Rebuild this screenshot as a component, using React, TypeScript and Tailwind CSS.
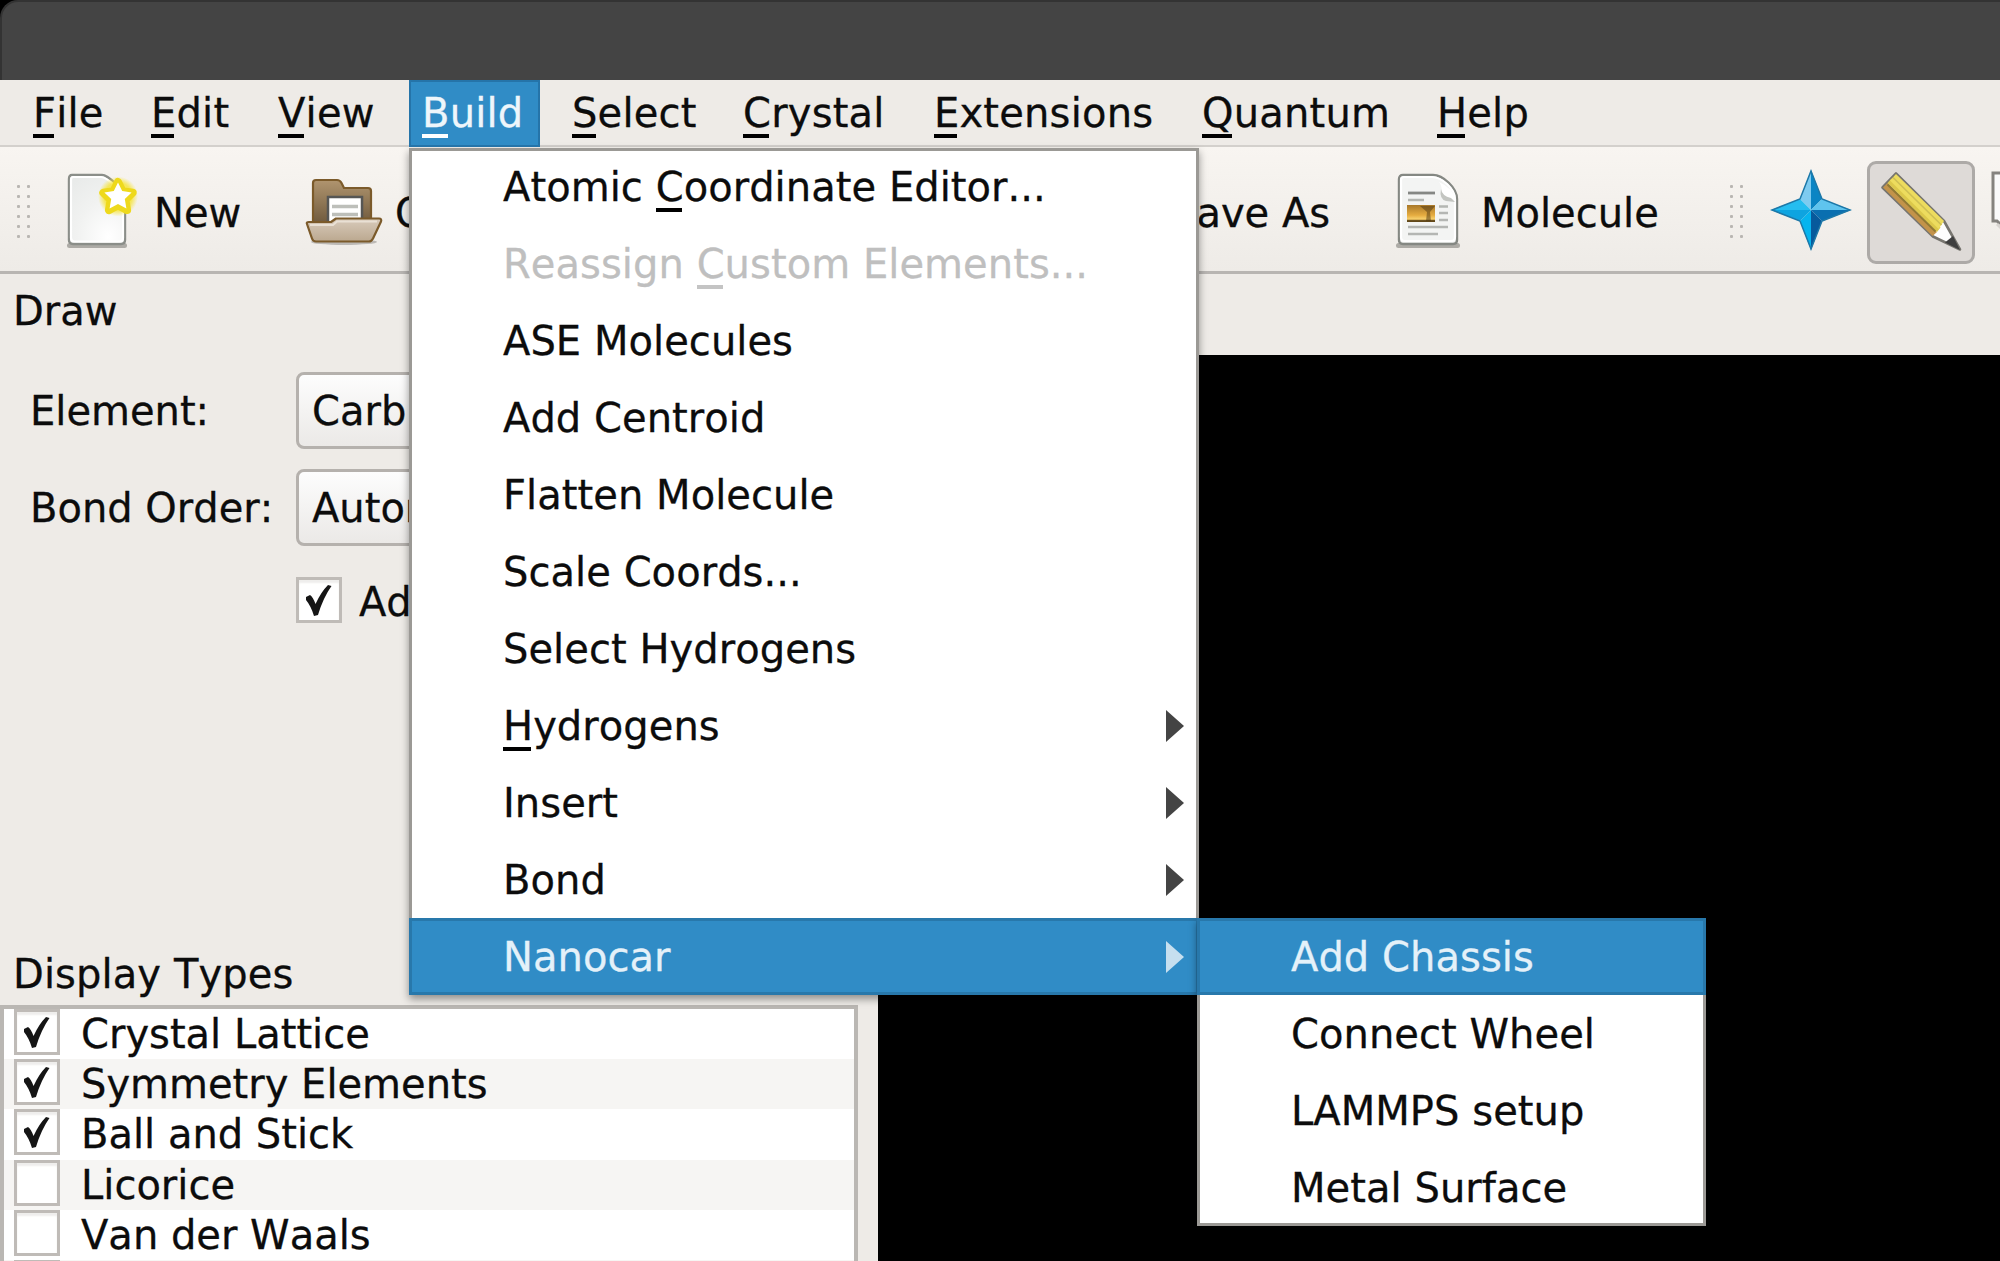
import type { ReactNode } from 'react';

function Mnemonic({ text, at, color = 'bg-black' }: { text: string; at: number; color?: string }) {
  return (
    <>
      {text.slice(0, at)}
      <span className="relative inline-block">
        {text[at]}
        <span className={`absolute left-0 right-[2px] bottom-0 h-[4px] ${color}`} />
      </span>
      {text.slice(at + 1)}
    </>
  );
}

const menus = [
  { label: 'File', box: 'w-[118px]' },
  { label: 'Edit', box: 'w-[127px]' },
  { label: 'View', box: 'w-[129px]' },
  { label: 'Build', box: 'w-[131px] mr-[34px]', active: true },
  { label: 'Select', box: 'w-[171px]' },
  { label: 'Crystal', box: 'w-[191px]' },
  { label: 'Extensions', box: 'w-[268px]' },
  { label: 'Quantum', box: 'w-[235px]' },
  { label: 'Help', box: 'w-[120px]' },
];

function MenuBar() {
  return (
    <div className="flex h-[67px] shrink-0 border-b-2 border-[#d3d0cc] bg-[#eeebe7] pl-[35px]">
      {menus.map((m) => (
        <div
          key={m.label}
          className={`flex h-[67px] shrink-0 items-start tracking-[0.2px] ${m.box} ${m.active ? 'z-10 border-2 border-[#2574a9] bg-[#308cc6] pl-[13px] pt-[6px] text-[#eef6fb]' : 'pt-[8px]'}`}
        >
          <span className="-ml-[2px]">
            <Mnemonic text={m.label} at={0} color={m.active ? 'bg-white' : 'bg-black'} />
          </span>
        </div>
      ))}
    </div>
  );
}

function Grip() {
  return (
    <div className="grid shrink-0 grid-cols-2 gap-[7px]">
      {Array.from({ length: 12 }, (_, i) => (
        <span key={i} className="size-[3px] rounded-[1px] bg-[#b9b6b2]" />
      ))}
    </div>
  );
}

function NewIcon() {
  return (
    <svg width="76" height="80" viewBox="0 0 76 80" className="shrink-0">
      <defs>
        <radialGradient id="paper" cx="0.7" cy="0.9" r="1">
          <stop offset="0" stopColor="#ffffff" />
          <stop offset="0.55" stopColor="#f1f2f1" />
          <stop offset="1" stopColor="#e9ebea" />
        </radialGradient>
        <radialGradient id="glow">
          <stop offset="0.7" stopColor="#f6e436" stopOpacity="0.8" />
          <stop offset="1" stopColor="#f6e436" stopOpacity="0" />
        </radialGradient>
      </defs>
      <rect x="4" y="71" width="60" height="5" rx="2.5" fill="#5c5a55" opacity="0.45" />
      <path d="M9 3h30c6 0 23 16 23 23v42q0 4-4 4H10q-4 0-4-4V7q0-4 3-4z" fill="url(#paper)" stroke="#8b8e89" strokeWidth="2.4" />
      <path d="M10 5h28c6 0 22 15 22 21v40q0 3.500-3.500 3.500H11.500Q8 69.500 8 66V8q0-3 2-3z" fill="none" stroke="#fff" strokeWidth="2.200" />
      <circle cx="55" cy="24.500" r="20" fill="url(#glow)" />
      <path
        d="M55 10l4.600 9.200 10.100 1.500-7.300 7.200 1.700 10.200-9.100-4.800-9.100 4.800 1.700-10.200-7.300-7.200 10.100-1.500z"
        fill="#fff"
        stroke="#eed91c"
        strokeWidth="8"
        strokeLinejoin="round"
      />
      <path d="M55 10.500l4.200 8.500 9.400 1.400-6.800 6.600 1.600 9.400-8.400-4.400-8.400 4.400 1.600-9.400-6.800-6.600 9.400-1.400z" fill="#fff" />
    </svg>
  );
}

function FolderIcon() {
  return (
    <svg width="80" height="72" viewBox="0 0 80 72" className="shrink-0">
      <defs>
        <linearGradient id="back" x1="0" y1="0" x2="0" y2="1">
          <stop offset="0" stopColor="#b0956f" />
          <stop offset="1" stopColor="#6b563a" />
        </linearGradient>
        <linearGradient id="front" x1="0" y1="0" x2="0" y2="1">
          <stop offset="0" stopColor="#d8cbbb" />
          <stop offset="1" stopColor="#bba88f" />
        </linearGradient>
      </defs>
      <ellipse cx="40" cy="66" rx="33" ry="3" fill="#5c5a55" opacity="0.35" />
      <path d="M9 50V7q0-3 3-3h21q3 0 4.500 3l2.500 5h24q3 0 3 3v35z" fill="url(#back)" stroke="#7b5a2a" strokeWidth="2.200" />
      <path d="M24 21h34v30H24z" fill="#fff" stroke="#565654" strokeWidth="2.500" />
      <path d="M28 30.500h26M28 38.500h26" stroke="#bdbfba" strokeWidth="3.600" />
      <path d="M3 48q-1-2 2-2h22l5-3.500h43q3 0 2 3l-8 17q-1.500 3-4 3H12q-3 0-4-3z" fill="url(#front)" stroke="#7b5a2a" strokeWidth="2.200" strokeLinejoin="round" />
      <path d="M6 49h23l4-3.500h40" fill="none" stroke="#e9e0d4" strokeWidth="2" />
    </svg>
  );
}

function MoleculeIcon() {
  return (
    <svg width="66" height="78" viewBox="0 0 66 78" className="shrink-0">
      <defs>
        <linearGradient id="sunset" x1="0" y1="0" x2="0" y2="1">
          <stop offset="0" stopColor="#a8782a" />
          <stop offset="0.6" stopColor="#e6ac40" />
          <stop offset="0.8" stopColor="#f5cc68" />
          <stop offset="1" stopColor="#8a6422" />
        </linearGradient>
      </defs>
      <rect x="1" y="70" width="64" height="5" rx="2.500" fill="#5c5a55" opacity="0.45" />
      <path d="M8 2h30c10 0 24 13 24 24v41q0 4-4 4H8q-4 0-4-4V6q0-4 4-4z" fill="#f3f4f3" stroke="#858883" strokeWidth="2.400" />
      <path d="M9 4h28c10 0 23 12 23 22v38q0 4-4 4H9.500Q6 68 6 64V7q0-3 3-3z" fill="none" stroke="#fff" strokeWidth="2.200" />
      <path d="M44 9q4 4 2 14l14 4Q58 15 44 9z" fill="#fff" />
      <path d="M46 16q1 7 10 9l4 4-9-1q-7-2-5-12z" fill="#c3c5c1" />
      <path d="M13 20h27" stroke="#858784" strokeWidth="2.800" />
      <path d="M13 27h16M44 33.500h9M44 40h9M44 47h9M13 54h40M13 61h30" stroke="#b4b6b3" strokeWidth="2.500" />
      <rect x="12" y="32" width="28" height="17" fill="url(#sunset)" />
      <path d="M12 48h28" stroke="#4b3612" strokeWidth="2" opacity="0.7" />
      <path d="M31 48l1-9-7-6h15l-5 6 1 9z" fill="#4b3612" opacity="0.5" />
    </svg>
  );
}

function CompassStar() {
  return (
    <svg width="82" height="82" viewBox="0 0 82 82" className="shrink-0">
      <path d="M41 1L30 30 41 41z" fill="#7ecbf0" />
      <path d="M41 1l11 29-11 11z" fill="#0b85c4" />
      <path d="M81 41L52 30 41 41z" fill="#5fc4ee" />
      <path d="M81 41L52 52 41 41z" fill="#0a6fb0" />
      <path d="M41 81l11-29-11-11z" fill="#075a9c" />
      <path d="M41 81L30 52l11-11z" fill="#06b4ee" />
      <path d="M1 41l29 11 11-11z" fill="#0ea4e0" />
      <path d="M1 41l29-11 11 11z" fill="#25bdf0" />
      <path d="M41 2l11 28 28 11-28 11-11 28-11-28L2 41l28-11z" fill="none" stroke="#1d78a8" strokeWidth="1.500" />
    </svg>
  );
}

function PencilIcon() {
  return (
    <svg width="84" height="84" viewBox="0 0 84 84">
      <path d="M3.500 17.500L17 3.500 65 51l16 28.500L54 66.500z" fill="#fdfdfd" stroke="#77756f" strokeWidth="2.600" strokeLinejoin="round" />
      <path d="M4 17.500l4.500-4.500L58 62l-4.500 4z" fill="#c3934a" />
      <path d="M8.500 13l4-4.500L61.500 57.500 58 62z" fill="#dcc84a" />
      <path d="M11 10.500L17 4l48 47-5.500 8z" fill="#eddc5e" />
      <path d="M8.500 14.500l48 47" stroke="#917a33" strokeWidth="2" />
      <path d="M14 7.500L62.500 55" stroke="#cfc054" strokeWidth="1.600" />
      <path d="M81 80l-7-14-8 6.500z" fill="#3f3f3f" />
    </svg>
  );
}

function ToolBar() {
  return (
    <div className="flex h-[127px] shrink-0 items-center overflow-hidden whitespace-nowrap border-b-[3px] border-[#b8b5b2] bg-linear-to-b from-[#f8f5f1] to-[#eeebe7] pl-[17px] pt-[5px]">
      <Grip />
      <div className="ml-[33px] flex w-[241px] shrink-0 items-center"><NewIcon /><span className="ml-[15px] pt-[3px]">New</span></div>
      <div className="flex w-[800px] shrink-0 items-center"><FolderIcon /><span className="ml-[11px] pt-[3px]">O</span></div>
      <div className="-ml-[35px] w-[326px] shrink-0 pl-[102px] pt-[3px]">Save As</div>
      <div className="flex w-[335px] shrink-0 items-center"><MoleculeIcon /><span className="ml-[20px] pt-[3px]">Molecule</span></div>
      <Grip />
      <div className="ml-[27px] shrink-0 pb-[3px]"><CompassStar /></div>
      <div className="ml-[15px] mt-px flex h-[103px] w-[108px] shrink-0 items-center justify-center rounded-[9px] border-[3px] border-[#adaaa7] bg-[#dedad7]"><PencilIcon /></div>
      <svg width="30" height="82" viewBox="0 0 30 82" className="ml-[16px] shrink-0">
        <path d="M2 2h32v50H8l-2-2H2z" fill="#fafafa" stroke="#85837f" strokeWidth="3" />
        <path d="M6 53l12 12" stroke="#d8d5d1" strokeWidth="3" />
      </svg>
    </div>
  );
}

function Check({ on }: { on: boolean }) {
  return (
    <span className="flex size-[46px] shrink-0 items-center justify-center border-[3px] border-[#bfbbb7] bg-white shadow-[inset_0_3px_2px_#efeeec]">
      {on && (
        <svg width="30" height="34" viewBox="0 0 30 34">
          <path d="M2 14l4-2q3 2 5.500 9Q17 9 24 2l3.500 1Q19 15 14 32l-4 1Q7 23 2 17z" fill="#151515" />
        </svg>
      )}
    </span>
  );
}

function Combo({ children }: { children: ReactNode }) {
  return (
    <div className="flex h-[77px] w-[300px] items-center rounded-[8px] border-[3px] border-[#b5b1ad] bg-linear-to-b from-[#fdfdfd] to-[#ebe9e7] pl-[13px]">
      {children}
    </div>
  );
}

const displayTypes = [
  { label: 'Crystal Lattice', on: true },
  { label: 'Symmetry Elements', on: true },
  { label: 'Ball and Stick', on: true },
  { label: 'Licorice', on: false },
  { label: 'Van der Waals', on: false },
  { label: '', on: false },
];

function SidePanel() {
  return (
    <div className="flex w-[878px] shrink-0 flex-col">
      <div className="pl-[13px] pt-[12px]">Draw</div>
      <div className="-ml-px grid grid-cols-[266px_300px] items-center gap-y-[20px] pl-[31px] pt-[36px]">
        <span>Element:</span>
        <Combo>Carb</Combo>
        <span>Bond Order:</span>
        <Combo>Autom</Combo>
      </div>
      <div className="ml-[296px] mt-[31px] flex h-[46px] items-center gap-[17px]">
        <Check on />
        <span className="pt-[3px]">Ad</span>
      </div>
      <div className="mt-[326px] h-[62px] pl-[13px] tracking-[0.1px]">Display Types</div>
      <div className="h-[256px] w-[858px] shrink-0 border-x-4 border-t-4 border-[#bab7b3] bg-white">
        {displayTypes.map((d) => (
          <div key={d.label} className="flex h-[50.200px] items-start gap-[21px] pl-[10px] even:bg-[#f6f5f3]">
            <Check on={d.on} />
            <span>{d.label}</span>
          </div>
        ))}
      </div>
    </div>
  );
}

type Item = { label: string; at?: number; disabled?: boolean; arrow?: boolean; active?: boolean };

const buildItems: Item[] = [
  { label: 'Atomic Coordinate Editor...', at: 7 },
  { label: 'Reassign Custom Elements...', at: 9, disabled: true },
  { label: 'ASE Molecules' },
  { label: 'Add Centroid' },
  { label: 'Flatten Molecule' },
  { label: 'Scale Coords...' },
  { label: 'Select Hydrogens' },
  { label: 'Hydrogens', at: 0, arrow: true },
  { label: 'Insert', arrow: true },
  { label: 'Bond', arrow: true },
  { label: 'Nanocar', arrow: true, active: true },
];

const nanocarItems: Item[] = [
  { label: 'Add Chassis', active: true },
  { label: 'Connect Wheel' },
  { label: 'LAMMPS setup' },
  { label: 'Metal Surface' },
];

function MenuItem({ item }: { item: Item }) {
  const tone = item.active
    ? 'border-y-[3px] border-[#2574a9] bg-[#308cc6] text-[#e4f1f9]'
    : item.disabled
      ? 'text-[#bfbfbf]'
      : '';
  return (
    <div className={`flex h-[77px] items-center justify-between pl-[94px] pr-[15px] ${tone}`}>
      <span className="tracking-[0.05px]">
        {item.at === undefined ? item.label : <Mnemonic text={item.label} at={item.at} color={item.disabled ? 'bg-[#c4c4c4]' : 'bg-black'} />}
      </span>
      {item.arrow && (
        <svg width="18" height="32" viewBox="0 0 18 32">
          <path d="M0 0l18 16L0 32z" fill={item.active ? '#c6dfef' : '#444'} />
        </svg>
      )}
    </div>
  );
}

function Menu({ items, place }: { items: Item[]; place: string }) {
  return (
    <div className={`absolute bg-white ${place}`}>
      {items.map((i) => (
        <MenuItem key={i.label} item={i} />
      ))}
      <div className="pointer-events-none absolute inset-0 border-[3px] border-[#9b9995]" />
      {items.map((i, n) =>
        i.active ? (
          <div key={i.label} className={`absolute inset-x-0 h-[77px] border-[3px] border-[#2878ab] ${n === 0 ? 'top-0' : 'bottom-0'}`} />
        ) : null,
      )}
    </div>
  );
}

export default function App() {
  return (
    <div className="relative flex h-[1261px] w-[2000px] flex-col overflow-hidden whitespace-nowrap bg-[#eeebe7] font-['DejaVu_Sans'] text-[40px] leading-[50px] text-[#0c0c0c] [-webkit-text-stroke:0.3px] [font-kerning:none]">
      <div className="h-[80px] shrink-0 bg-black">
        <div className="h-full rounded-tl-[18px] border-l-2 border-t-2 border-[#333] bg-[#444]" />
      </div>
      <MenuBar />
      <ToolBar />
      <div className="flex min-h-0 flex-1">
        <SidePanel />
        <div className="mt-[81px] flex-1 bg-black" />
      </div>
      <Menu items={buildItems} place="left-[409px] top-[148px] w-[790px] shadow-[0_4px_8px_rgba(0,0,0,0.4)]" />
      <Menu items={nanocarItems} place="left-[1197px] top-[918px] w-[509px] shadow-[0_4px_8px_rgba(0,0,0,0.4)]" />
    </div>
  );
}
